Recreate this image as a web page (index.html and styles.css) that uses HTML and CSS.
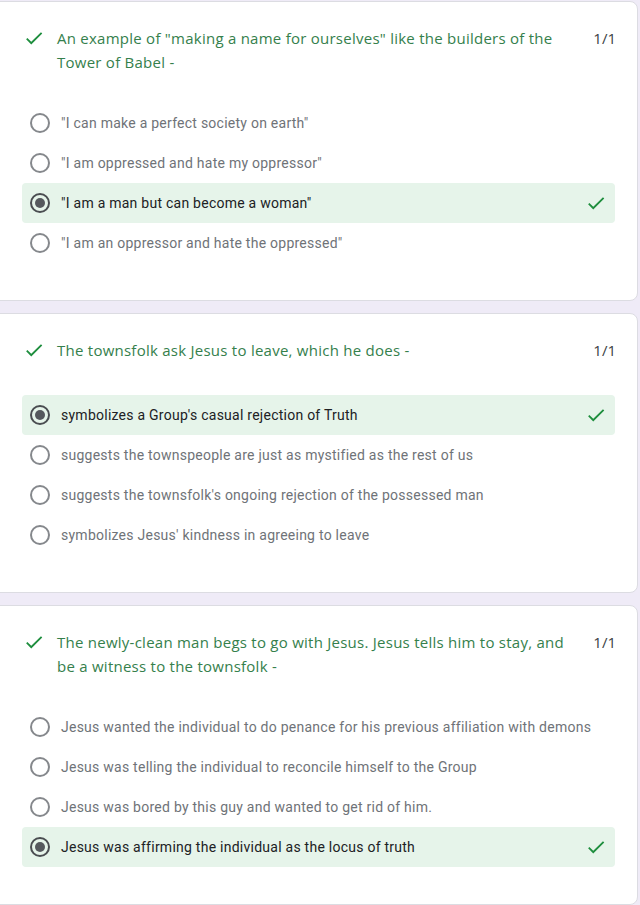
FILE: index.html
```html
<!DOCTYPE html>
<html>
<head>
<meta charset="utf-8">
<link rel="stylesheet" href="styles.css">
</head>
<body>
<div class="page">
  <section class="card">
    <div class="q-head">
      <svg class="q-check" viewBox="0 0 24 24"><path d="M9 16.2 4.8 12l-1.4 1.4L9 19 21 7l-1.4-1.4L9 16.2z"/></svg>
      <div class="q-title">An example of "making a name for ourselves" like the builders of the Tower of Babel -</div>
      <div class="q-score">1/1</div>
    </div>
    <ul class="options">
      <li class="opt"><span class="radio"></span><span class="opt-text">"I can make a perfect society on earth"</span></li>
      <li class="opt"><span class="radio"></span><span class="opt-text">"I am oppressed and hate my oppressor"</span></li>
      <li class="opt opt-correct"><span class="radio radio-on"></span><span class="opt-text">"I am a man but can become a woman"</span><svg class="opt-check" viewBox="0 0 24 24"><path d="M9 16.2 4.8 12l-1.4 1.4L9 19 21 7l-1.4-1.4L9 16.2z"/></svg></li>
      <li class="opt"><span class="radio"></span><span class="opt-text">"I am an oppressor and hate the oppressed"</span></li>
    </ul>
  </section>
  <section class="card">
    <div class="q-head q-head-single">
      <svg class="q-check" viewBox="0 0 24 24"><path d="M9 16.2 4.8 12l-1.4 1.4L9 19 21 7l-1.4-1.4L9 16.2z"/></svg>
      <div class="q-title">The townsfolk ask Jesus to leave, which he does -</div>
      <div class="q-score">1/1</div>
    </div>
    <ul class="options">
      <li class="opt opt-correct"><span class="radio radio-on"></span><span class="opt-text">symbolizes a Group's casual rejection of Truth</span><svg class="opt-check" viewBox="0 0 24 24"><path d="M9 16.2 4.8 12l-1.4 1.4L9 19 21 7l-1.4-1.4L9 16.2z"/></svg></li>
      <li class="opt"><span class="radio"></span><span class="opt-text">suggests the townspeople are just as mystified as the rest of us</span></li>
      <li class="opt"><span class="radio"></span><span class="opt-text">suggests the townsfolk's ongoing rejection of the possessed man</span></li>
      <li class="opt"><span class="radio"></span><span class="opt-text">symbolizes Jesus' kindness in agreeing to leave</span></li>
    </ul>
  </section>
  <section class="card">
    <div class="q-head">
      <svg class="q-check" viewBox="0 0 24 24"><path d="M9 16.2 4.8 12l-1.4 1.4L9 19 21 7l-1.4-1.4L9 16.2z"/></svg>
      <div class="q-title">The newly-clean man begs to go with Jesus. Jesus tells him to stay, and be a witness to the townsfolk -</div>
      <div class="q-score">1/1</div>
    </div>
    <ul class="options">
      <li class="opt"><span class="radio"></span><span class="opt-text">Jesus wanted the individual to do penance for his previous affiliation with demons</span></li>
      <li class="opt"><span class="radio"></span><span class="opt-text">Jesus was telling the individual to reconcile himself to the Group</span></li>
      <li class="opt"><span class="radio"></span><span class="opt-text">Jesus was bored by this guy and wanted to get rid of him.</span></li>
      <li class="opt opt-correct"><span class="radio radio-on"></span><span class="opt-text">Jesus was affirming the individual as the locus of truth</span><svg class="opt-check" viewBox="0 0 24 24"><path d="M9 16.2 4.8 12l-1.4 1.4L9 19 21 7l-1.4-1.4L9 16.2z"/></svg></li>
    </ul>
  </section>
</div>
</body>
</html>
```
FILE: styles.css
```css
html, body {
  margin: 0;
  padding: 0;
  background: #efebf7;
}
body {
  font-family: Roboto, "Liberation Sans", sans-serif;
  overflow: hidden;
}
.page {
  display: flex;
  flex-direction: column;
  gap: 12px;
  padding-top: 1px;
  margin-left: -12px;
  width: 650px;
}
.card {
  background: #fff;
  border: 1px solid #dcdce2;
  border-radius: 8px;
  padding: 24px 0 37px 12px;
}
.q-head {
  display: flex;
  align-items: flex-start;
  padding-left: 24px;
  padding-right: 21px;
  margin-bottom: 29px;
}
.q-head-single {
  margin-bottom: 33px;
}
.q-check {
  width: 22px;
  height: 22px;
  fill: #1e8e3e;
  flex: none;
  margin-left: -2px;
  margin-top: 1px;
}
.q-title {
  flex: 1;
  margin-left: 12px;
  font-family: "Open Sans", sans-serif;
  font-size: 15px;
  line-height: 24px;
  letter-spacing: 0.25px;
  color: #35804c;
  max-width: 528px;
}
.q-score {
  margin-left: auto;
  font-family: "Open Sans", sans-serif;
  font-size: 15px;
  line-height: 24px;
  color: #3c4043;
  padding-left: 8px;
}
.options {
  list-style: none;
  margin: 0;
  padding: 0 22px 0 21px;
}
.opt {
  display: flex;
  align-items: center;
  height: 40px;
  padding-left: 8px;
  padding-right: 8px;
  border-radius: 4px;
}
.opt-correct {
  background: #e6f4ea;
}
.radio {
  width: 16px;
  height: 16px;
  border: 2px solid #85888c;
  border-radius: 50%;
  flex: none;
  box-sizing: content-box;
  display: flex;
  align-items: center;
  justify-content: center;
}
.radio-on {
  border-color: #4a4d51;
}
.radio-on::after {
  content: "";
  width: 10px;
  height: 10px;
  border-radius: 50%;
  background: #55585d;
}
.opt-text {
  margin-left: 11px;
  font-size: 14px;
  color: #6f7378;
  letter-spacing: 0.25px;
}
.opt-correct .opt-text {
  color: #202124;
}
.opt-check {
  margin-left: auto;
  width: 22px;
  height: 22px;
  fill: #1e8e3e;
}
```
